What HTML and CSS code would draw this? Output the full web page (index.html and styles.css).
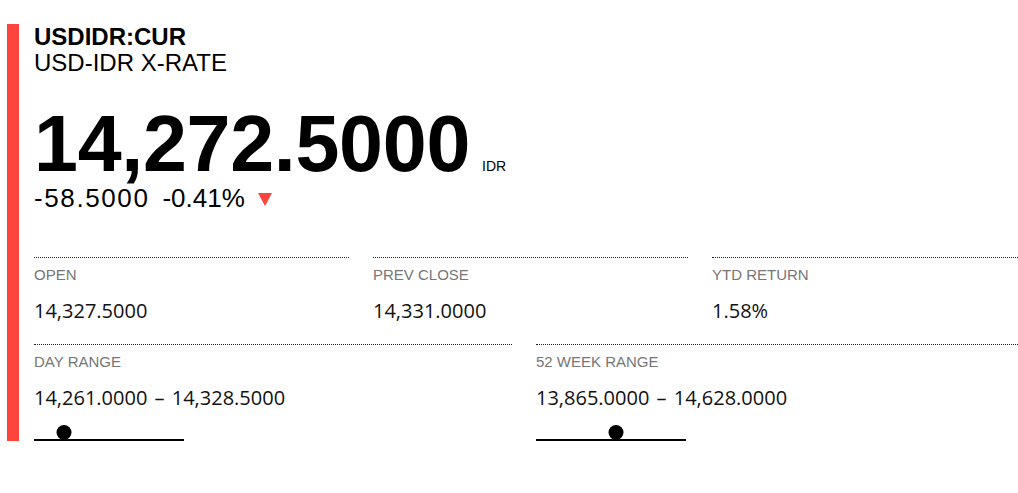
FILE: index.html
```html
<!DOCTYPE html>
<html lang="en">
<head>
<meta charset="utf-8">
<title>USDIDR:CUR</title>
<link rel="stylesheet" href="styles.css">
</head>
<body>
<section class="quote">
  <header class="quote-head">
    <h1 class="ticker">USDIDR:CUR</h1>
    <h2 class="name">USD-IDR X-RATE</h2>
  </header>
  <div class="price-row">
    <span class="price">14,272.5000</span>
    <span class="currency">IDR</span>
  </div>
  <div class="change-row">
    <span class="change change-abs">-58.5000</span>
    <span class="change change-pct">-0.41%</span>
    <svg class="arrow" width="14" height="13" viewBox="0 0 14 13"><polygon points="0,0 14,0 7,13" fill="#ff433d"/></svg>
  </div>
  <div class="stats stats-3">
    <div class="stat">
      <div class="label">OPEN</div>
      <div class="value">14,327.5000</div>
    </div>
    <div class="stat">
      <div class="label">PREV CLOSE</div>
      <div class="value">14,331.0000</div>
    </div>
    <div class="stat">
      <div class="label">YTD RETURN</div>
      <div class="value">1.58%</div>
    </div>
  </div>
  <div class="stats stats-2">
    <div class="stat range">
      <div class="label">DAY RANGE</div>
      <div class="value range-value">14,261.0000 – 14,328.5000</div>
      <div class="slider"><span class="dot" style="left: 20%"></span></div>
    </div>
    <div class="stat range">
      <div class="label">52 WEEK RANGE</div>
      <div class="value range-value">13,865.0000 – 14,628.0000</div>
      <div class="slider"><span class="dot" style="left: 53.4%"></span></div>
    </div>
  </div>
</section>
</body>
</html>
```
FILE: styles.css
```css
html, body {
  margin: 0;
  padding: 0;
  background: #fff;
}
body {
  padding-top: 24px;
  font-family: "Liberation Sans", Arial, sans-serif;
  color: #000;
}
.quote {
  margin-left: 7px;
  border-left: 12px solid #ff433d;
  padding-left: 15px;
}
.quote-head {
  margin: 0;
}
.ticker, .name {
  margin: 0;
  font-size: 24px;
  line-height: 26px;
}
.ticker {
  font-weight: 700;
}
.name {
  font-weight: 400;
}
.price-row {
  display: flex;
  align-items: baseline;
  margin-top: 29px;
}
.price {
  font-size: 79px;
  font-weight: 700;
  line-height: 78px;
  letter-spacing: -0.3px;
}
.currency {
  font-size: 14px;
  margin-left: 12px;
}
.change-row {
  display: flex;
  align-items: center;
  margin-top: 0;
  height: 30px;
}
.change {
  font-size: 26px;
  line-height: 30px;
}
.change-abs {
  letter-spacing: 1.6px;
  margin-right: 13px;
}
.change-pct {
  margin-right: 13px;
}
.arrow {
  margin-top: 2px;
}
.stats {
  display: grid;
  column-gap: 24px;
}
.stats-3 {
  margin-top: 44px;
  grid-template-columns: 315px 315px 1fr;
}
.stats-2 {
  grid-template-columns: 478px 1fr;
}
.stat {
  border-top: 1px dotted #222;
  padding-top: 8px;
  padding-bottom: 19px;
}
.stat.range {
  padding-bottom: 0;
}
.label {
  font-size: 15px;
  line-height: 18px;
  color: #767676;
}
.value {
  margin-top: 12px;
  font-family: "Open Sans", "Noto Sans", sans-serif;
  font-size: 20px;
  line-height: 29px;
  color: #111;
}
.range-value {
  word-spacing: 2px;
}
.slider {
  position: relative;
  width: 150px;
  height: 16px;
  margin-top: 13px;
  border-bottom: 2px solid #000;
  box-sizing: border-box;
}
.dot {
  position: absolute;
  top: 0;
  width: 15px;
  height: 15px;
  border-radius: 50%;
  background: #000;
  transform: translateX(-50%);
}
```
